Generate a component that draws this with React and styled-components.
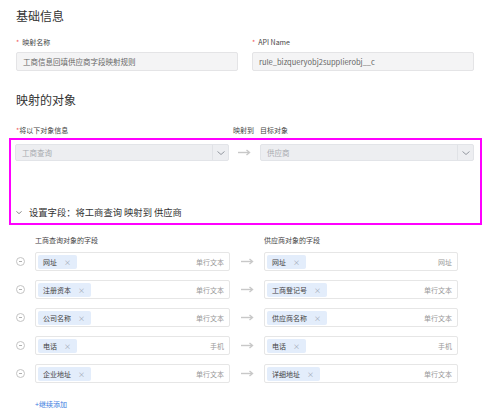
import React from "react";
import styled, { createGlobalStyle } from "styled-components";

const Global = createGlobalStyle`
  html, body { margin: 0; padding: 0; background: #fff; }
  body { font-family: "Noto Sans CJK SC", "Noto Sans", sans-serif; color: #333; }
  * { box-sizing: border-box; }
`;

const Page = styled.div`
  width: 487px;
  height: 418px;
  padding: 8px 13px 0 16px;
  overflow: hidden;
`;

const SectionTitle = styled.div`
  font-size: 12px;
  line-height: 16px;
  color: #333;
  margin-top: ${(p) => p.$mt || 0}px;
`;

const TwoCols = styled.div`
  display: grid;
  grid-template-columns: 222px 222px;
  column-gap: 14px;
  margin-top: 13px;
`;

const Label = styled.div`
  font-size: 7px;
  line-height: 10px;
  color: #444;
  white-space: nowrap;
  margin-top: ${(p) => p.$mt || 0}px;
  padding-left: ${(p) => p.$pl || 0}px;
`;

const Star = styled.span`
  color: #f05a5a;
  margin-right: ${(p) => p.$gap || 0}px;
`;

const ReadInput = styled.div`
  margin-top: 5px;
  height: 19px;
  background: #f4f4f5;
  border: 1px solid #e4e4e6;
  border-radius: 2px;
  font-size: 7.5px;
  line-height: 17px;
  color: #666;
  padding-left: 6px;
  white-space: nowrap;
`;

const LabelGrid = styled.div`
  display: grid;
  grid-template-columns: 213px 31px 1fr;
  margin-top: 17px;
`;

const Highlight = styled.div`
  margin: 3px -8px 0 -7px;
  border: 2px solid #f0f;
  padding: 4px 6px 4px 4px;
`;

const SelectRow = styled.div`
  display: grid;
  grid-template-columns: 214px 31px 1fr;
  align-items: center;
`;

const Select = styled.div`
  height: 17px;
  display: flex;
  background: #edeef1;
  border: 1px solid #e2e4e8;
  border-radius: 2px;
`;

const SelectText = styled.div`
  flex: 1;
  font-size: 7.5px;
  line-height: 15px;
  color: #a8abb0;
  padding-left: 6px;
`;

const SelectCaret = styled.div`
  width: 16px;
  border-left: 1px solid #e0e2e6;
  display: flex;
  align-items: center;
  justify-content: center;
`;

const ArrowCell = styled.div`
  display: flex;
  justify-content: center;
  align-items: center;
`;

const FieldToggle = styled.div`
  margin-top: 44px;
  display: flex;
  align-items: center;
  font-size: 9.3px;
  line-height: 14px;
  color: #333;
  padding-left: 1px;
  gap: 7px;
`;

const FieldGrid = styled.div`
  display: grid;
  grid-template-columns: 19px 195px 34px 194px;
  align-items: center;
  margin-top: ${(p) => p.$mt || 0}px;
`;

const Minus = styled.div`
  width: 9px;
  height: 9px;
  border: 1px solid #c4c4c4;
  border-radius: 50%;
  position: relative;
  &::after {
    content: "";
    position: absolute;
    left: 2px;
    right: 2px;
    top: 3px;
    height: 1px;
    background: #b0b0b0;
  }
`;

const FieldBox = styled.div`
  height: 19px;
  border: 1px solid #e6e6e6;
  border-radius: 2px;
  background: #fff;
  display: flex;
  align-items: center;
  padding: 0 5px 0 2px;
`;

const Tag = styled.div`
  height: 14px;
  background: #e3edfb;
  border-radius: 2px;
  display: flex;
  align-items: center;
  padding: 0 6px 0 5px;
  font-size: 7px;
  color: #444;
  gap: 7px;
`;

const TagX = styled.span`
  color: #9aa3b0;
  font-size: 7px;
`;

const TypeText = styled.div`
  margin-left: auto;
  font-size: 7px;
  color: #999;
`;

const AddMore = styled.div`
  margin: 15px 0 0 19px;
  font-size: 7px;
  line-height: 12px;
  color: #3c7be0;
`;

const Arrow = () => (
  <svg width="13" height="7" viewBox="0 0 13 7">
    <path d="M0 3.5H11" stroke="#c8c8c8" strokeWidth="1.4" />
    <path d="M8.5 1L11.5 3.5L8.5 6" stroke="#c8c8c8" strokeWidth="1.4" fill="none" />
  </svg>
);

const Chevron = ({ color = "#8a8f99", w = 8 }) => (
  <svg width={w} height={w / 2} viewBox="0 0 8 4">
    <path d="M0.5 0.5L4 3.5L7.5 0.5" stroke={color} strokeWidth="0.9" fill="none" />
  </svg>
);

const rows = [
  ["网址", "单行文本", "网址", "网址"],
  ["注册资本", "单行文本", "工商登记号", "单行文本"],
  ["公司名称", "单行文本", "供应商名称", "单行文本"],
  ["电话", "手机", "电话", "手机"],
  ["企业地址", "单行文本", "详细地址", "单行文本"],
];

const Field = ({ tag, type }) => (
  <FieldBox>
    <Tag>
      {tag}
      <TagX>×</TagX>
    </Tag>
    <TypeText>{type}</TypeText>
  </FieldBox>
);

export default function App() {
  return (
    <>
      <Global />
      <Page>
        <SectionTitle>基础信息</SectionTitle>
        <TwoCols>
          <div>
            <Label>
              <Star $gap={3}>*</Star>映射名称
            </Label>
            <ReadInput>工商信息回填供应商字段映射规则</ReadInput>
          </div>
          <div>
            <Label>
              <Star $gap={3}>*</Star>API Name
            </Label>
            <ReadInput>rule_bizqueryobj2supplierobj__c</ReadInput>
          </div>
        </TwoCols>

        <SectionTitle $mt={21}>映射的对象</SectionTitle>
        <LabelGrid>
          <Label>
            <Star>*</Star>将以下对象信息
          </Label>
          <Label $pl={4}>映射到</Label>
          <Label>目标对象</Label>
        </LabelGrid>

        <Highlight>
          <SelectRow>
            <Select>
              <SelectText>工商查询</SelectText>
              <SelectCaret>
                <Chevron />
              </SelectCaret>
            </Select>
            <ArrowCell>
              <Arrow />
            </ArrowCell>
            <Select>
              <SelectText>供应商</SelectText>
              <SelectCaret>
                <Chevron />
              </SelectCaret>
            </Select>
          </SelectRow>
          <FieldToggle>
            <Chevron color="#555" w={6} />
            <span>设置字段：将工商查询 映射到 供应商</span>
          </FieldToggle>
        </Highlight>

        <FieldGrid $mt={10}>
          <span />
          <Label>工商查询对象的字段</Label>
          <span />
          <Label>供应商对象的字段</Label>
        </FieldGrid>

        {rows.map((r, i) => (
          <FieldGrid key={i} $mt={i === 0 ? 7 : 9}>
            <Minus />
            <Field tag={r[0]} type={r[1]} />
            <ArrowCell>
              <Arrow />
            </ArrowCell>
            <Field tag={r[2]} type={r[3]} />
          </FieldGrid>
        ))}

        <AddMore>+继续添加</AddMore>
      </Page>
    </>
  );
}
